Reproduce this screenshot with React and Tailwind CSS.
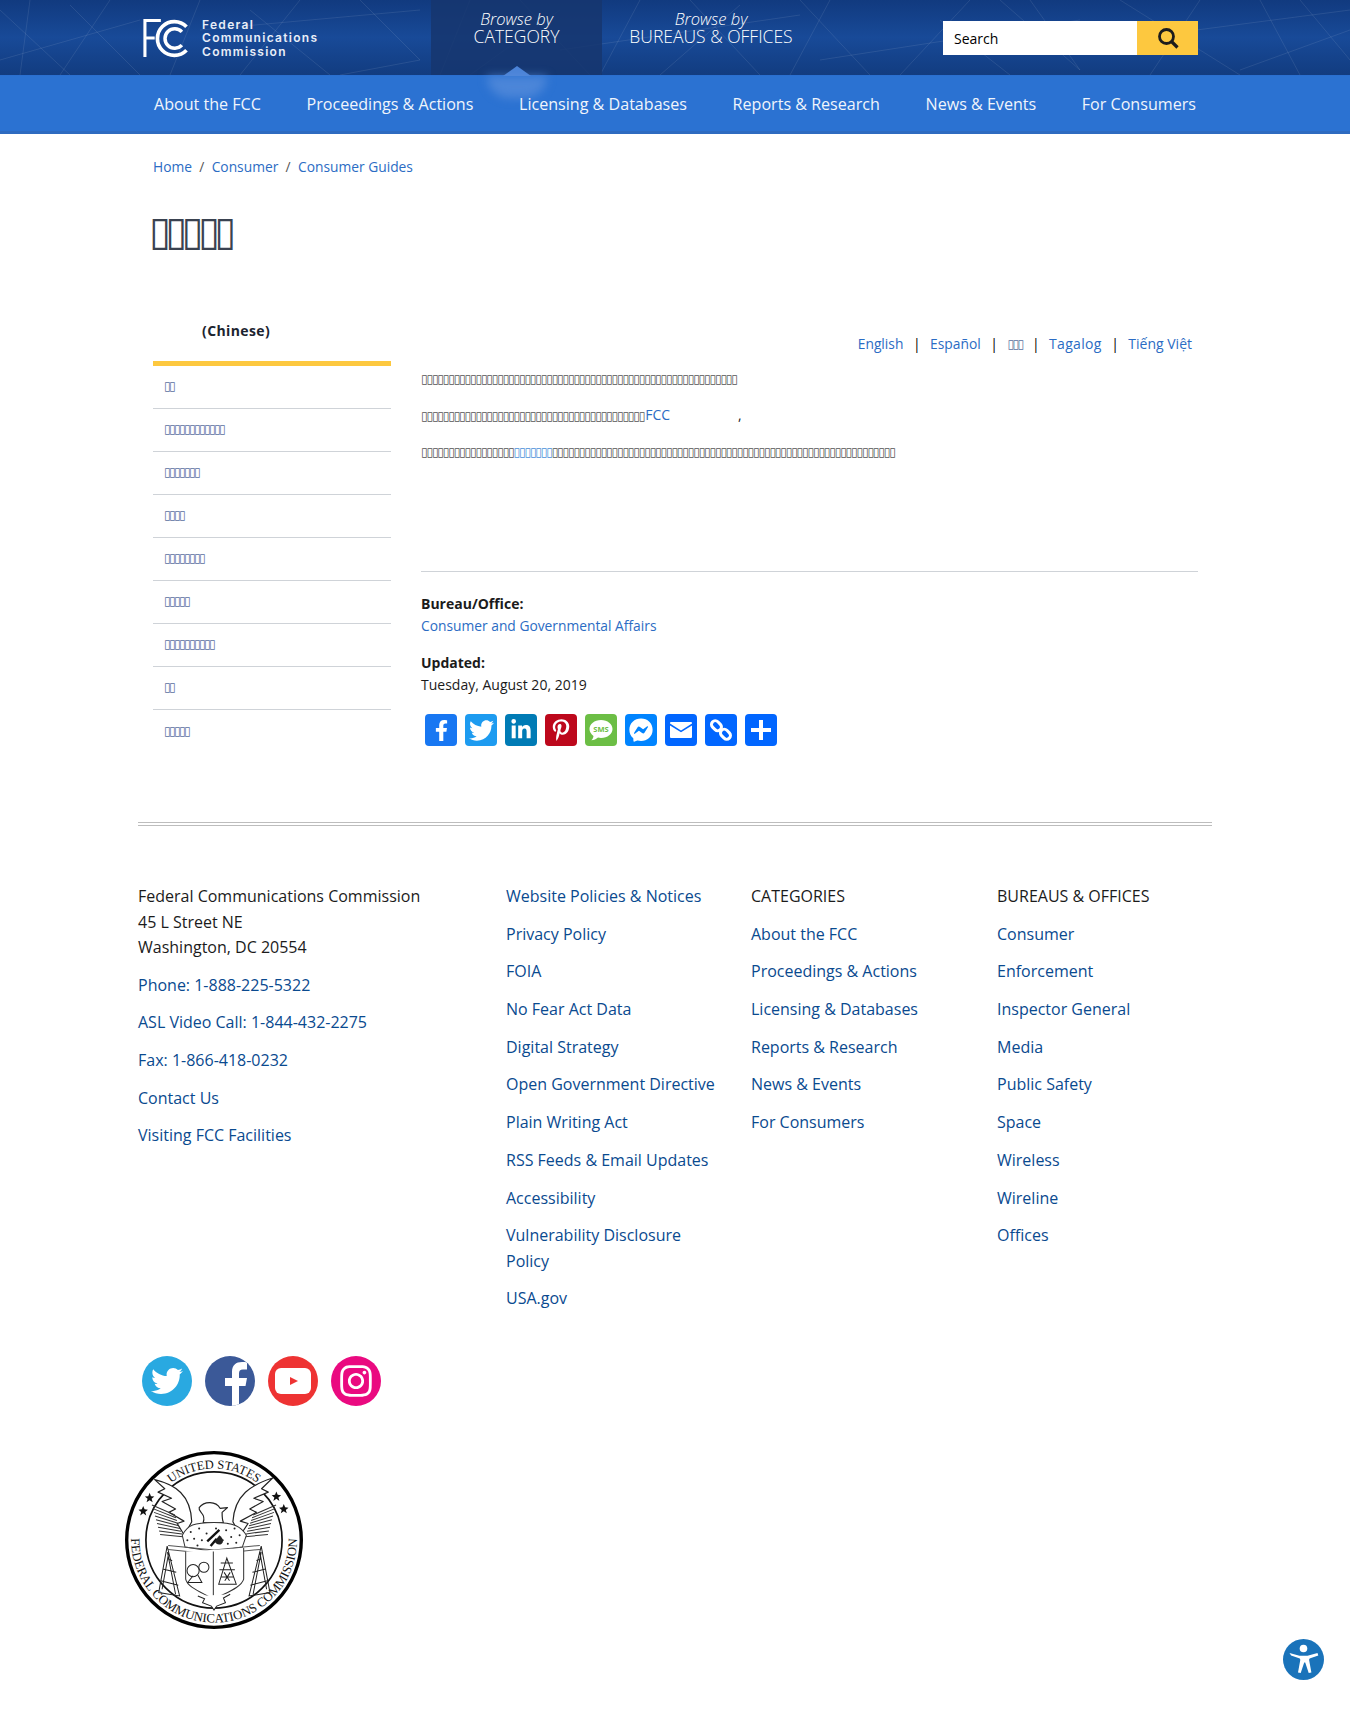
import { FaFacebookF, FaTwitter, FaLinkedinIn, FaPinterestP, FaFacebookMessenger, FaInstagram } from 'react-icons/fa';

const tofu = (n) => '\u25AF'.repeat(n);

const navItems = ['About the FCC', 'Proceedings & Actions', 'Licensing & Databases', 'Reports & Research', 'News & Events', 'For Consumers'];
const sideItems = [2, 12, 7, 4, 8, 5, 10, 2, 5];
const policyLinks = ['Website Policies & Notices', 'Privacy Policy', 'FOIA', 'No Fear Act Data', 'Digital Strategy', 'Open Government Directive', 'Plain Writing Act', 'RSS Feeds & Email Updates', 'Accessibility', 'Vulnerability Disclosure Policy', 'USA.gov'];
const categories = ['About the FCC', 'Proceedings & Actions', 'Licensing & Databases', 'Reports & Research', 'News & Events', 'For Consumers'];
const bureaus = ['Consumer', 'Enforcement', 'Inspector General', 'Media', 'Public Safety', 'Space', 'Wireless', 'Wireline', 'Offices'];
const contactLinks = ['Phone: 1-888-225-5322', 'ASL Video Call: 1-844-432-2275', 'Fax: 1-866-418-0232', 'Contact Us', 'Visiting FCC Facilities'];

const netLines = [
  [0, 10, 70, 75], [30, 0, 20, 75], [70, 5, 140, 75], [110, 0, 60, 75], [200, 0, 170, 75], [250, 10, 330, 75], [300, 0, 240, 75], [360, 0, 420, 60], [420, 60, 340, 75], [470, 0, 440, 75],
  [520, 0, 590, 75], [560, 10, 470, 75], [640, 0, 600, 75], [690, 0, 760, 75], [740, 5, 660, 75], [800, 0, 870, 75], [830, 0, 790, 75], [900, 75, 970, 0], [940, 20, 1010, 75], [1000, 0, 1080, 70],
  [1080, 70, 1030, 0], [1120, 0, 1240, 75], [1200, 0, 1150, 75], [1260, 0, 1300, 75], [1350, 30, 1240, 70], [1300, 0, 1350, 60], [0, 60, 140, 20], [200, 30, 420, 10], [560, 50, 800, 15], [820, 60, 1080, 20], [1120, 40, 1350, 10]
];

function FccLogo() {
  return (
    <svg width="48" height="39" viewBox="0 0 46 38" className="shrink-0">
      <path d="M1.500 37V1.500H17M1.500 18.500H11" fill="none" stroke="#fff" strokeWidth="3" />
      <path d="M42 7.500A16.500 16.500 0 1 0 42 30.500" fill="none" stroke="#fff" strokeWidth="3.600" />
      <path d="M37.500 12.500A9.500 9.500 0 1 0 37.500 25.500" fill="none" stroke="#fff" strokeWidth="3.400" />
    </svg>
  );
}

function ShareIcon({ bg, children }) {
  return <div className={`flex h-8 w-8 items-center justify-center rounded-[4px] text-white ${bg}`}>{children}</div>;
}

function ShareBar() {
  return (
    <div className="mt-[18px] ml-1 flex gap-2">
      <ShareIcon bg="bg-[#1877f2]"><FaFacebookF size={21} /></ShareIcon>
      <ShareIcon bg="bg-[#1d9bf0]"><FaTwitter size={25} /></ShareIcon>
      <ShareIcon bg="bg-[#007bb5]"><FaLinkedinIn size={22} /></ShareIcon>
      <ShareIcon bg="bg-[#bd081c]"><FaPinterestP size={22} /></ShareIcon>
      <ShareIcon bg="bg-[#6cbe45]">
        <svg width="28" height="28" viewBox="0 0 28 28">
          <path d="M14 4C7.400 4 2.500 8 2.500 13c0 2.800 1.500 5.200 4 6.900-.2 1.700-1 3.300-2.200 4.400 2.600-.2 5-1.300 6.700-2.800 1 .2 2 .4 3 .4 6.600 0 11.500-3.900 11.500-8.900S20.600 4 14 4z" fill="#fff" />
          <text x="14" y="16" textAnchor="middle" fontSize="7.500" fontWeight="700" fill="#6cbe45" fontFamily="'Open Sans', sans-serif">SMS</text>
        </svg>
      </ShareIcon>
      <ShareIcon bg="bg-[#0084ff]"><FaFacebookMessenger size={24} /></ShareIcon>
      <ShareIcon bg="bg-[#0166ff]">
        <svg width="22" height="16" viewBox="0 0 22 16">
          <path d="M1 0h20a1 1 0 0 1 1 1v.6L11 8.400 0 1.600V1a1 1 0 0 1 1-1z" fill="#fff" />
          <path d="M0 3.500l11 6.800 11-6.800V15a1 1 0 0 1-1 1H1a1 1 0 0 1-1-1z" fill="#fff" />
        </svg>
      </ShareIcon>
      <ShareIcon bg="bg-[#0166ff]">
        <svg width="24" height="24" viewBox="0 0 24 24" fill="none" stroke="#fff" strokeWidth="3">
          <rect x="2" y="4" width="11" height="7.500" rx="3.700" transform="rotate(45 7.500 7.700)" />
          <rect x="11" y="12.500" width="11" height="7.500" rx="3.700" transform="rotate(45 16.500 16.200)" />
        </svg>
      </ShareIcon>
      <ShareIcon bg="bg-[#0166ff]">
        <svg width="20" height="20" viewBox="0 0 20 20"><path d="M8 0h4v8h8v4h-8v8H8v-8H0V8h8z" fill="#fff" /></svg>
      </ShareIcon>
    </div>
  );
}

function Seal() {
  const hatch = [];
  for (let i = 0; i < 9; i++) {
    hatch.push(<path key={`l${i}`} d={`M${100 + i * 3} ${500 + i * 11}L${168 + i * 3} ${530 + i * 8}`} />);
    hatch.push(<path key={`r${i}`} d={`M${468 - i * 3} ${500 + i * 11}L${400 - i * 3} ${530 + i * 8}`} />);
  }
  const dots = [[215, 580], [240, 570], [262, 585], [225, 600], [205, 605], [248, 605], [320, 575], [345, 570], [335, 595], [360, 590], [310, 605], [350, 612], [235, 620], [325, 615], [290, 570]];
  return (
    <svg width="178" height="178" viewBox="20 340 528 528" className="block">
      <defs>
        <path id="sealTop" d="M72 604A212 212 0 0 1 496 604" />
        <path id="sealBottom" d="M44 549A246 246 0 1 0 524 549" />
      </defs>
      <circle cx="284" cy="604" r="259" fill="#fff" stroke="#000" strokeWidth="10" />
      <circle cx="284" cy="604" r="202" fill="none" stroke="#111" strokeWidth="5" />
      <g fill="#111">
        <path d="M93 464l4 10 10 1-8 7 3 10-9-6-9 6 3-10-8-7 10-1z" />
        <path d="M74 503l4 10 10 1-8 7 3 10-9-6-9 6 3-10-8-7 10-1z" />
        <path d="M469 460l4 10 10 1-8 7 3 10-9-6-9 6 3-10-8-7 10-1z" />
        <path d="M491 497l4 10 10 1-8 7 3 10-9-6-9 6 3-10-8-7 10-1z" />
      </g>
      <g fill="#fff" stroke="#222" strokeWidth="3.500" strokeLinejoin="round">
        <path d="M108 425C170 440 215 470 218 550L196 590L175 555L195 548L150 522L170 512L130 490L158 480L118 462L138 452z" />
        <path d="M458 420C395 440 345 470 340 550L362 590L385 555L362 548L410 522L390 512L430 490L402 480L445 462L425 452z" />
        <path d="M252 552C262 525 236 522 240 508C255 488 290 488 302 510L324 508L308 522C308 535 308 545 312 552z" />
      </g>
      <text fontFamily="'Liberation Serif', serif" fontSize="37" fill="#111"><textPath href="#sealTop" startOffset="50%" textAnchor="middle">UNITED STATES</textPath></text>
      <text fontFamily="'Liberation Serif', serif" fontSize="38" fill="#111"><textPath href="#sealBottom" startOffset="50%" textAnchor="middle">FEDERAL COMMUNICATIONS COMMISSION</textPath></text>
      <g stroke="#333" strokeWidth="3" fill="none">{hatch}</g>
      <path d="M190 590C205 560 225 552 284 552C345 552 365 565 380 590L368 625L284 638L198 625z" fill="#fff" stroke="#333" strokeWidth="3" />
      <g fill="#222">{dots.map(([x, y]) => <circle key={`${x}-${y}`} cx={x} cy={y} r="3" />)}</g>
      <g stroke="#111" strokeWidth="7" fill="none">
        <path d="M264 608L300 574" />
        <path d="M274 622L292 600" />
      </g>
      <path d="M300 590c10 8 15 18 6 26-8 4-18 0-20-8z" fill="#222" />
      <path d="M148 620L284 634L420 620M148 632L284 646L420 632" fill="none" stroke="#555" strokeWidth="3" />
      <path d="M200 638V720C205 745 250 760 284 780C320 760 365 745 372 720V628M282 638V778" fill="#fff" stroke="#333" strokeWidth="3" />
      <g fill="none" stroke="#222" strokeWidth="3">
        <path d="M145 622L120 760L182 770ZM132 690L172 700M126 725L178 738M145 660L160 665M150 640L130 750M146 640L170 765" />
        <path d="M424 622L450 760L388 770ZM436 690L398 700M442 725L392 738M424 660L410 665M420 640L440 750M424 640L400 765" />
        <path d="M322 658L298 735H350ZM304 672H340M300 692H346M306 714H342M314 700L330 725M332 700L316 725" />
        <circle cx="222" cy="695" r="18" />
        <circle cx="254" cy="685" r="15" />
        <path d="M222 710L206 730H248L236 708" />
      </g>
      <path d="M236 770L256 778L250 790L276 800L284 812L292 800L318 790L312 776L332 765" fill="#fff" stroke="#222" strokeWidth="3" />
    </svg>
  );
}

function SocialCircle({ bg, children }) {
  return <div className={`flex h-[50px] w-[50px] items-center justify-center overflow-hidden rounded-full text-white ${bg}`}>{children}</div>;
}

export default function App() {
  return (
    <div className="relative h-[1711px] overflow-hidden bg-white font-['Open_Sans',sans-serif] text-[#1b1b1b]">
      {/* Header */}
      <header className="relative h-[75px] overflow-hidden bg-gradient-to-b from-[#113a7f] via-[#184a98] to-[#123c80]">
        <svg className="absolute inset-0" width="1350" height="75" viewBox="0 0 1350 75">
          <g stroke="#fff" strokeOpacity="0.09" strokeWidth="1">
            {netLines.map((l) => <line key={l.join('-')} x1={l[0]} y1={l[1]} x2={l[2]} y2={l[3]} />)}
          </g>
        </svg>
        <div className="relative flex h-full pl-[143px]">
          <div className="flex w-[288px] items-center gap-[11px] pt-[1px]">
            <FccLogo />
            <div className="font-['Inter',sans-serif] text-[12px] leading-[13.500px] font-semibold tracking-[1.300px] text-[#e8eef8]">
              <div>Federal</div>
              <div>Communications</div>
              <div>Commission</div>
            </div>
          </div>
          <div className="flex h-full w-[171px] flex-col items-center bg-[#16366f]/85 pt-[10px] text-white">
            <span className="text-[16.500px] leading-[18px] font-light italic">Browse by</span>
            <span className="-mt-[1px] text-[17.500px] leading-[18px] font-light">CATEGORY</span>
          </div>
          <div className="flex h-full w-[218px] flex-col items-center pt-[10px] text-white">
            <span className="text-[16.500px] leading-[18px] font-light italic">Browse by</span>
            <span className="-mt-[1px] text-[17.500px] leading-[18px] font-light">BUREAUS &amp; OFFICES</span>
          </div>
          <div className="mt-[21px] ml-[123px] flex h-[34px] w-[255px] self-start">
            <div className="flex flex-1 items-center bg-white pl-[11px] text-[14px] text-black">Search</div>
            <div className="flex w-[61px] items-center justify-center bg-[#fdc83f]">
              <svg width="22" height="22" viewBox="0 0 22 22" fill="none" stroke="#1c1c1c">
                <circle cx="9.500" cy="9.500" r="7" strokeWidth="2.800" />
                <path d="M14.500 14.500L20.500 20.500" strokeWidth="3.200" />
              </svg>
            </div>
          </div>
        </div>
      </header>

      {/* Main nav */}
      <nav className="relative h-[59px] border-t border-[#2a6fd0] border-b-[3px] border-b-[#2e6bc0] bg-[#2b72d2]">
        <div className="absolute top-[-10px] left-[517px] h-0 w-0 -translate-x-1/2 border-x-[14px] border-b-[10px] border-x-transparent border-b-[#4b83d8]" />
        <div className="absolute top-0 left-[487px] h-[22px] w-[60px] rounded-b-[30px] bg-[#5a8fdc]/70 blur-[5px]" />
        <div className="relative flex h-full items-center justify-between pt-[1px] pr-[154px] pl-[154px] text-[16.100px] text-[#f0f5fc]">
          {navItems.map((item) => <span key={item}>{item}</span>)}
        </div>
      </nav>

      <main className="pl-[153px]">
        {/* Breadcrumb */}
        <div className="flex pt-[23px] text-[13.800px] leading-[20px] text-[#2b6cc4]">
          <span>Home</span>
          <span className="px-[7.300px] text-[#555]">/</span>
          <span>Consumer</span>
          <span className="px-[7.300px] text-[#555]">/</span>
          <span>Consumer Guides</span>
        </div>

        <h1 className="mt-[29px] -ml-[4px] h-[107px] font-['DejaVu_Sans',sans-serif] text-[40px] leading-[50px] font-normal tracking-[-5.700px] text-[#3a4250]">{tofu(5)}</h1>

        <div className="flex pr-[152px]">
          {/* Sidebar */}
          <aside className="w-[238px] shrink-0">
            <div className="h-[48px] pt-[8px] pl-[49px] text-[14px] leading-[20px] font-bold tracking-[0.400px] text-[#1b2430]">(Chinese)</div>
            <div className="h-[5px] bg-[#fdc83f]" />
            {sideItems.map((n, i) => (
              <div key={i} className="flex h-[43px] items-center border-b border-[#cfd3d8] pb-[2px] pl-[11px] font-['DejaVu_Sans',sans-serif] text-[12px] tracking-[-1.600px] text-[#5a6f9f] last:border-b-0">
                {tofu(n)}
              </div>
            ))}
          </aside>

          {/* Content */}
          <section className="ml-[30px] flex-1">
            <div className="flex justify-end pt-[21px] pr-[6px] text-[14px] leading-[20px] text-[#2b6cc4]">
              <span className="text-[13.800px]">English</span>
              <span className="px-[9.500px] text-black">|</span>
              <span className="text-[13.800px]">Español</span>
              <span className="px-[9.500px] text-black">|</span>
              <span className="font-['DejaVu_Sans',sans-serif] text-[12px] tracking-[-1.600px] text-[#5a6f9f]">{tofu(3)}</span>
              <span className="px-[9.500px] text-black">|</span>
              <span className="tracking-[0.300px]">Tagalog</span>
              <span className="px-[9.500px] text-black">|</span>
              <span>Tiếng Việt</span>
            </div>
            <div className="mt-[14px] h-[203px] text-[14px] leading-[20px] text-[#555]">
              <p><span className="font-['DejaVu_Sans',sans-serif] text-[12px] tracking-[-1.160px]">{tofu(58)}</span></p>
              <p className="mt-[16px]">
                <span className="font-['DejaVu_Sans',sans-serif] text-[12px] tracking-[-1.160px]">{tofu(41)}</span>
                <span className="ml-[1px] text-[#2b6cc4]">FCC</span>
                <span className="ml-[68px] text-[#222]">,</span>
              </p>
              <p className="mt-[16px] font-['DejaVu_Sans',sans-serif] text-[12px] tracking-[-1.160px]">
                {tofu(17)}
                <span className="text-[#4a90d9]">{tofu(7)}</span>
                {tofu(63)}
              </p>
            </div>
            <div className="border-t border-[#cfd3d8] pt-[21px] text-[14px] leading-[22px]">
              <div className="font-bold">Bureau/Office:</div>
              <div className="text-[13.800px] text-[#2b6cc4]">Consumer and Governmental Affairs</div>
              <div className="mt-[15px] font-bold">Updated:</div>
              <div>Tuesday, August 20, 2019</div>
            </div>
            <ShareBar />
          </section>
        </div>
      </main>

      {/* Footer */}
      <footer className="mx-[138px] mt-[69px]">
        <div className="h-[4px] border-y border-[#bdbdbd]" />
        <div className="mt-[58px] grid grid-cols-[368px_245px_246px_1fr] text-[16px] leading-[25.500px] text-[#1b1b1b]">
          <div>
            <div>Federal Communications Commission<br />45 L Street NE<br />Washington, DC 20554</div>
            {contactLinks.map((t) => <div key={t} className="mt-[12.200px] text-[#0a4a8f]">{t}</div>)}
          </div>
          <div className="w-[218px] text-[#0a4a8f]">
            {policyLinks.map((t) => <div key={t} className="mb-[12.200px]">{t}</div>)}
          </div>
          <div className="text-[#0a4a8f]">
            <div className="mb-[12.200px] text-[#1b1b1b]">CATEGORIES</div>
            {categories.map((t) => <div key={t} className="mb-[12.200px]">{t}</div>)}
          </div>
          <div className="text-[#0a4a8f]">
            <div className="mb-[12.200px] text-[#1b1b1b]">BUREAUS &amp; OFFICES</div>
            {bureaus.map((t) => <div key={t} className="mb-[12.200px]">{t}</div>)}
          </div>
        </div>

        <div className="mt-[32px] flex gap-[13px] pl-1">
          <SocialCircle bg="bg-[#29a9e1]"><FaTwitter size={32} /></SocialCircle>
          <SocialCircle bg="bg-[#3b5998]">
            <svg width="50" height="50" viewBox="0 0 50 50"><path d="M27 50V30h-7v-8h7v-6c0-7 4-10 10-10 2 0 4 .2 5 .4v7h-4c-3 0-4 1.500-4 4V22h8l-1.500 8H34v20z" fill="#fff" /></svg>
          </SocialCircle>
          <SocialCircle bg="bg-[#ee3333]">
            <svg width="36" height="26" viewBox="0 0 36 26"><rect width="36" height="26" rx="6" fill="#fff" /><path d="M15 9l8 4-8 4z" fill="#ee3333" /></svg>
          </SocialCircle>
          <SocialCircle bg="bg-[#ea0a80]"><FaInstagram size={36} /></SocialCircle>
        </div>
        <div className="mt-[45px] -ml-[13px]"><Seal /></div>
      </footer>

      {/* Accessibility widget */}
      <div className="fixed right-[26px] bottom-[31px] h-[41px] w-[41px]">
        <svg width="41" height="41" viewBox="0 0 41 41">
          <circle cx="20.500" cy="20.500" r="20.500" fill="#1a73ba" />
          <circle cx="20.500" cy="9.500" r="3.800" fill="#fff" />
          <path d="M6.500 14l10 2.700h8l10-2.700.8 2.500-8 2.700c-1 .4-1.300 1-1.100 2.300l2.200 12-2.700.6-3.500-10.500h-1l-3.500 10.500-2.700-.6 2.200-12c.2-1.300-.1-1.900-1.100-2.300l-8-2.700z" fill="#fff" />
        </svg>
      </div>
    </div>
  );
}
